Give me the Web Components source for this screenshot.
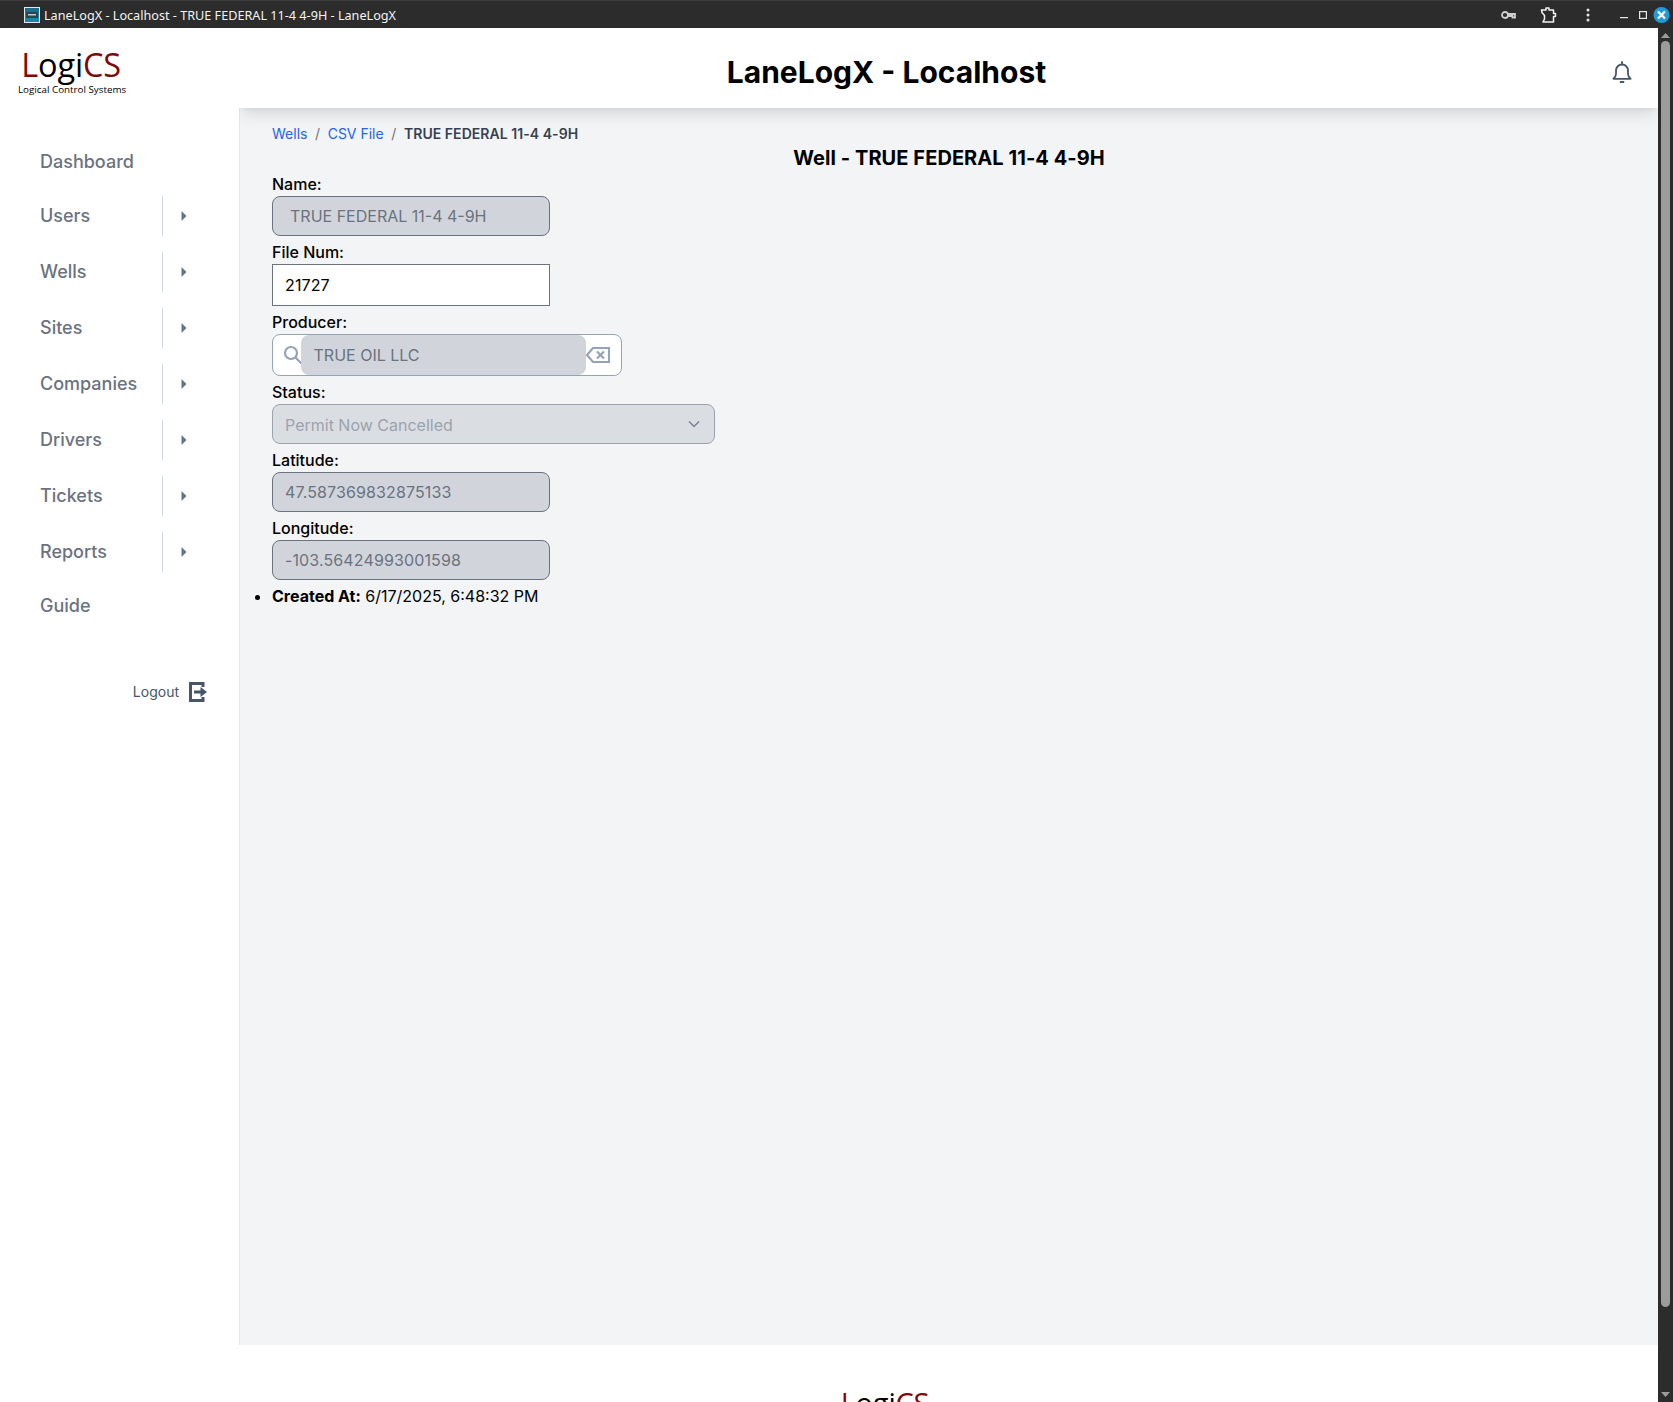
<!DOCTYPE html>
<html lang="en">
<head>
<meta charset="utf-8">
<title>LaneLogX - Localhost</title>
<style>
    html, body {
        margin: 0;
        height: 100%;
        overflow: hidden;
        font-family: Inter, "Liberation Sans", sans-serif;
        background: #fff;
    }
    #frame {
        display: flex;
        height: calc(100vh - 28px);
    }
    #page {
        flex: 1;
        min-width: 0;
        overflow: hidden;
    }
    #top {
        display: flex;
        height: 1317px;
    }
    #right {
        flex: 1;
        min-width: 0;
        display: flex;
        flex-direction: column;
    }
</style>
</head>
<body>
<window-bar>LaneLogX - Localhost - TRUE FEDERAL 11-4 4-9H - LaneLogX</window-bar>
<div id="frame">
    <div id="page">
        <div id="top">
            <side-bar>
                <nav-item>Dashboard</nav-item>
                <nav-item expandable>Users</nav-item>
                <nav-item expandable>Wells</nav-item>
                <nav-item expandable>Sites</nav-item>
                <nav-item expandable>Companies</nav-item>
                <nav-item expandable>Drivers</nav-item>
                <nav-item expandable>Tickets</nav-item>
                <nav-item expandable>Reports</nav-item>
                <nav-item>Guide</nav-item>
            </side-bar>
            <div id="right">
                <top-header>LaneLogX - Localhost</top-header>
                <main-panel>
                    <bread-crumbs current="TRUE FEDERAL 11-4 4-9H">
                        <a href="#">Wells</a>
                        <a href="#">CSV File</a>
                    </bread-crumbs>
                    <page-title>Well - TRUE FEDERAL 11-4 4-9H</page-title>
                    <form-field label="Name:" kind="locked" inset>TRUE FEDERAL 11-4 4-9H</form-field>
                    <form-field label="File Num:" kind="plain" numeric>21727</form-field>
                    <form-field label="Producer:" kind="search">TRUE OIL LLC</form-field>
                    <form-field label="Status:" kind="select">Permit Now Cancelled</form-field>
                    <form-field label="Latitude:" kind="locked" numeric>47.587369832875133</form-field>
                    <form-field label="Longitude:" kind="locked" numeric>-103.56424993001598</form-field>
                    <info-line label="Created At:">6/17/2025, 6:48:32 PM</info-line>
                </main-panel>
            </div>
        </div>
        <page-footer></page-footer>
    </div>
    <fake-scrollbar></fake-scrollbar>
</div>

<script>
class WindowBar extends HTMLElement {
    constructor() {
        super();
        this.attachShadow({ mode: "open" }).innerHTML = `
        <style>
        :host {
            display: flex;
            align-items: center;
            height: 28px;
            box-sizing: border-box;
            background: #2c2c2c;
            border-top: 1px solid #3c3c3c;
            color: #f2f2f2;
            font: 12.65px "Noto Sans", "Open Sans", sans-serif;
            padding-left: 24px;
        }
        .favicon {
            width: 16px;
            height: 16px;
            margin-right: 4px;
            flex: none;
        }
        .title { flex: 1; white-space: nowrap; }
        .tools {
            display: flex;
            align-items: center;
            width: 172px;
            height: 100%;
            position: relative;
        }
        .tools svg { position: absolute; top: 50%; transform: translateY(-50%); }
        </style>
        <svg class="favicon" viewBox="0 0 16 16">
            <rect width="16" height="16" fill="#dfe8eb"/>
            <rect x="1" y="1" width="14" height="14" fill="#1b86a8"/>
            <rect x="1" y="1" width="14" height="4" fill="#1a6f8c"/>
            <rect x="2" y="5" width="12" height="6" fill="#2d4450"/>
            <rect x="4" y="7" width="8" height="1.5" fill="#b9cdd4"/>
        </svg>
        <span class="title"><slot></slot></span>
        <div class="tools">
            <svg style="left:0" width="15" height="10" viewBox="0 0 15 10" fill="none" stroke="#cfcfcf" stroke-width="1.800">
                <circle cx="4" cy="5" r="3"/><path d="M7 4h7v3.500h-2.500v-1.500h-4.500"/>
            </svg>
            <svg style="left:39px" width="17" height="17" viewBox="0 0 17 17" fill="none" stroke="#f2f2f2" stroke-width="1.5" stroke-linejoin="round">
                <path d="M1.5 3.5h4.5v-2h3v2h4.500v3.500h2v3h-2v5.500h-10.500l1.500-3v-3.500l-2.500-3z"/>
            </svg>
            <svg style="left:85px" width="4" height="14" viewBox="0 0 4 14" fill="#e6e6e6">
                <circle cx="2" cy="2" r="1.500"/><circle cx="2" cy="7" r="1.500"/><circle cx="2" cy="12" r="1.500"/>
            </svg>
            <svg style="left:119px; margin-top:3px" width="8" height="2" viewBox="0 0 8 2"><rect width="8" height="1.200" fill="#e6e6e6"/></svg>
            <svg style="left:138px" width="8" height="8" viewBox="0 0 8 8" fill="none" stroke="#e6e6e6" stroke-width="1.200"><rect x=".6" y=".6" width="6.800" height="6.800"/></svg>
            <svg style="left:152px" width="17" height="17" viewBox="0 0 17 17">
                <circle cx="8.500" cy="8.500" r="8" fill="#1f9bdc"/>
                <path d="M5 5l7 7M12 5l-7 7" stroke="#fff" stroke-width="2.200"/>
            </svg>
        </div>`;
    }
}

class LogicLogo extends HTMLElement {
    constructor() {
        super();
        this.attachShadow({ mode: "open" }).innerHTML = `
        <style>
        :host {
            display: inline-block;
            font-family: "Open Sans", "Liberation Sans", sans-serif;
            text-align: center;
            color: #000;
        }
        .mark {
            display: block;
            margin-left: -2px;
            font-size: var(--logo-size, 32.5px);
            line-height: 1.18;
            letter-spacing: -0.2px;
            white-space: nowrap;
        }
        .red { color: #7c0a0a; }
        .sub {
            display: block;
            font-size: var(--logo-sub, 9.8px);
            line-height: 12px;
            white-space: nowrap;
        }
        </style>
        <span class="mark"><span class="red">L</span>ogi<span class="red">CS</span></span>
        <span class="sub">Logical Control Systems</span>`;
    }
}

class SideBar extends HTMLElement {
    constructor() {
        super();
        this.attachShadow({ mode: "open" }).innerHTML = `
        <style>
        :host {
            display: flex;
            flex-direction: column;
            width: 239px;
            flex: none;
            background: #fff;
            position: relative;
            z-index: 2;
        }
        .brand {
            height: 80px;
            padding: 18px 0 0 18px;
            box-sizing: border-box;
        }
        nav {
            display: flex;
            flex-direction: column;
            gap: 16px;
            padding-top: 36px;
        }
        .logout {
            display: flex;
            justify-content: flex-end;
            align-items: center;
            gap: 10px;
            margin-top: 58px;
            padding-right: 32px;
            font-size: 14px;
            line-height: 20px;
            color: #475569;
        }
        </style>
        <div class="brand"><logic-logo></logic-logo></div>
        <nav><slot></slot></nav>
        <div class="logout">
            <span>Logout</span>
            <svg width="18" height="20" viewBox="0 0 18 20" fill="none" stroke="#475569" stroke-width="3">
                <path d="M14 5v-3.500h-12.500v17h12.500v-3.500"/>
                <path d="M5 10h8"/>
                <path d="M11.500 5l6.500 5-6.500 5z" fill="#475569" stroke="none"/>
            </svg>
        </div>`;
    }
}

class NavItem extends HTMLElement {
    constructor() {
        super();
        this.attachShadow({ mode: "open" }).innerHTML = `
        <style>
        :host {
            display: flex;
            align-items: center;
            height: 36px;
            padding-left: 40px;
            font-size: 18px;
            font-weight: 500;
            color: #6b7280;
        }
        :host([expandable]) { height: 40px; }
        .label { width: 122px; flex: none; padding-bottom: 2px; }
        .toggle {
            display: none;
            align-items: center;
            height: 40px;
            border-left: 1px solid #cbd5e1;
            padding-left: 18px;
        }
        :host([expandable]) .toggle { display: flex; }
        </style>
        <span class="label"><slot></slot></span>
        <span class="toggle">
            <svg width="6" height="10" viewBox="0 0 6 10"><path d="M.5 0l5 5-5 5z" fill="#6b7280"/></svg>
        </span>`;
    }
}

class TopHeader extends HTMLElement {
    constructor() {
        super();
        this.attachShadow({ mode: "open" }).innerHTML = `
        <style>
        :host {
            display: flex;
            align-items: center;
            height: 80px;
            flex: none;
            background: #fff;
            box-shadow: 0 10px 15px -3px rgba(0,0,0,.1), 0 4px 6px -4px rgba(0,0,0,.1);
            position: relative;
            z-index: 1;
        }
        h1 {
            flex: 1;
            margin: 0;
            padding-top: 8px;
            text-align: center;
            font-size: 30px;
            line-height: 36px;
            font-weight: 700;
            color: #000;
        }
        .actions {
            width: 124px;
            display: flex;
            justify-content: flex-end;
            padding: 8px 26px 0 0;
            box-sizing: border-box;
        }
        </style>
        <h1><slot></slot></h1>
        <div class="actions">
            <svg width="20" height="23" viewBox="0 0 20 23" fill="none" stroke="#475569" stroke-width="1.800" stroke-linejoin="round">
                <path d="M10 3.500a6 6 0 0 0-6 6v3.500c0 2.500-1 3.500-2.600 4.800h17.200c-1.600-1.300-2.600-2.300-2.600-4.800v-3.500a6 6 0 0 0-6-6z"/>
                <path d="M10 1v2.500M8.500 21h3" stroke-linecap="round"/>
            </svg>
        </div>`;
    }
}

class MainPanel extends HTMLElement {
    constructor() {
        super();
        this.attachShadow({ mode: "open" }).innerHTML = `
        <style>
        :host {
            display: block;
            flex: 1;
            background: #f3f4f6;
            border-left: 1px solid #e5e7eb;
            padding: 16px 32px 0 32px;
            color: #000;
        }
        </style>
        <slot></slot>`;
    }
}

class BreadCrumbs extends HTMLElement {
    constructor() {
        super();
        this.attachShadow({ mode: "open" }).innerHTML = `
        <style>
        :host {
            display: flex;
            align-items: center;
            height: 20px;
            font-size: 14px;
            line-height: 20px;
            white-space: nowrap;
        }
        ::slotted(a) {
            color: #2563eb;
            text-decoration: none;
            font-weight: 400;
        }
        ::slotted(a)::after {
            content: "/";
            color: #6b7280;
            margin: 0 7.6px;
        }
        .current { font-weight: 600; color: #374151; letter-spacing: .05px; }
        </style>
        <slot></slot>
        <span class="current">${this.getAttribute("current")}</span>`;
    }
}

class PageTitle extends HTMLElement {
    constructor() {
        super();
        this.attachShadow({ mode: "open" }).innerHTML = `
        <style>
        :host {
            display: block;
            height: 28px;
            text-align: center;
            font-size: 20px;
            line-height: 28px;
            font-weight: 700;
            letter-spacing: .07px;
            color: #000;
        }
        </style>
        <slot></slot>`;
    }
}

class FormField extends HTMLElement {
    constructor() {
        super();
        const kind = this.getAttribute("kind");
        this.attachShadow({ mode: "open" }).innerHTML = `
        <style>
        :host {
            display: block;
            margin-bottom: 4px;
            font-size: 16px;
        }
        label {
            display: block;
            height: 24px;
            line-height: 24px;
            font-weight: 500;
            color: #000;
        }
        .box {
            display: flex;
            align-items: center;
            box-sizing: border-box;
            width: 278px;
            height: 40px;
            padding: 0 12px;
            line-height: 24px;
            border: 1px solid #6b7280;
            border-radius: 8px;
            white-space: nowrap;
        }
        :host([numeric]) .box { letter-spacing: .12px; }
        .locked { background: #d1d5db; color: #6b7280; }
        :host([inset]) .locked { padding-left: 17px; }
        .plain {
            height: 42px;
            background: #fff;
            color: #000;
            border-radius: 0;
        }
        .select {
            width: 443px;
            background: #dadde2;
            color: #9ca3af;
            border-color: #9ca3af;
            justify-content: space-between;
        }
        .select span { padding-top: 1px; }
        .search {
            width: 350px;
            height: 42px;
            padding: 0 0 0 10px;
            background: #fff;
            border-color: #94a3b8;
            position: relative;
        }
        .chip {
            position: absolute;
            left: 28px;
            top: 0;
            bottom: 0;
            width: 285px;
            padding-left: 12.5px;
            display: flex;
            align-items: center;
            box-sizing: border-box;
            background: #d1d5db;
            color: #6b7280;
            border-radius: 8px;
        }
        .clear { position: absolute; right: 11px; top: 11px; }
        </style>
        <label>${this.getAttribute("label")}</label>
        <div class="box ${kind}">${this.inner(kind)}</div>`;
    }

    inner(kind) {
        if (kind === "search") {
            return `
            <svg width="20" height="20" viewBox="0 0 20 20" fill="none" stroke="#94a3b8" stroke-width="2.200">
                <circle cx="8" cy="8" r="6"/><path d="M12.500 12.500l6 6"/>
            </svg>
            <span class="chip"><slot></slot></span>
            <svg class="clear" width="24" height="18" viewBox="0 0 24 18" fill="none" stroke="#94a3b8" stroke-width="2.200">
                <path d="M7 2h16v14h-16l-6-7z"/><path d="M11 5.500l7 7M18 5.500l-7 7"/>
            </svg>`;
        }
        if (kind === "select") {
            return `
            <span><slot></slot></span>
            <svg width="12" height="8" viewBox="0 0 12 8" fill="none" stroke="#7b8290" stroke-width="1.500" style="margin-right:2px">
                <path d="M1 1.500l5 5 5-5"/>
            </svg>`;
        }
        return `<span><slot></slot></span>`;
    }
}

class InfoLine extends HTMLElement {
    constructor() {
        super();
        this.attachShadow({ mode: "open" }).innerHTML = `
        <style>
        :host {
            display: block;
            font-size: 16px;
            line-height: 24px;
            color: #000;
        }
        ul { margin: 0; padding: 0; }
        b { font-weight: 700; }
        </style>
        <ul><li><b>${this.getAttribute("label")}</b> <slot></slot></li></ul>`;
    }
}

class PageFooter extends HTMLElement {
    constructor() {
        super();
        this.attachShadow({ mode: "open" }).innerHTML = `
        <style>
        :host {
            display: block;
            background: #fff;
            padding: 41px 0 0 0;
            text-align: center;
            --logo-size: 29px;
            --logo-sub: 8.500px;
            position: relative;
            left: 57px;
        }
        </style>
        <logic-logo></logic-logo>`;
    }
}

class FakeScrollbar extends HTMLElement {
    constructor() {
        super();
        this.attachShadow({ mode: "open" }).innerHTML = `
        <style>
        :host {
            display: flex;
            flex-direction: column;
            align-items: center;
            width: 15px;
            flex: none;
            background: #2c2c2c;
            padding-top: 5px;
            box-sizing: border-box;
        }
        .thumb {
            width: 9px;
            height: 1266px;
            margin-top: 3px;
            background: #9c9c9c;
            border-radius: 5px;
        }
        .end { margin-top: auto; margin-bottom: 5px; }
        </style>
        <svg width="9" height="5" viewBox="0 0 9 5"><path d="M4.500 0l4.500 5h-9z" fill="#9c9c9c"/></svg>
        <div class="thumb"></div>
        <svg class="end" width="9" height="5" viewBox="0 0 9 5"><path d="M4.500 5l4.500-5h-9z" fill="#9c9c9c"/></svg>`;
    }
}

customElements.define("window-bar", WindowBar);
customElements.define("logic-logo", LogicLogo);
customElements.define("side-bar", SideBar);
customElements.define("nav-item", NavItem);
customElements.define("top-header", TopHeader);
customElements.define("main-panel", MainPanel);
customElements.define("bread-crumbs", BreadCrumbs);
customElements.define("page-title", PageTitle);
customElements.define("form-field", FormField);
customElements.define("info-line", InfoLine);
customElements.define("page-footer", PageFooter);
customElements.define("fake-scrollbar", FakeScrollbar);
</script>
</body>
</html>
